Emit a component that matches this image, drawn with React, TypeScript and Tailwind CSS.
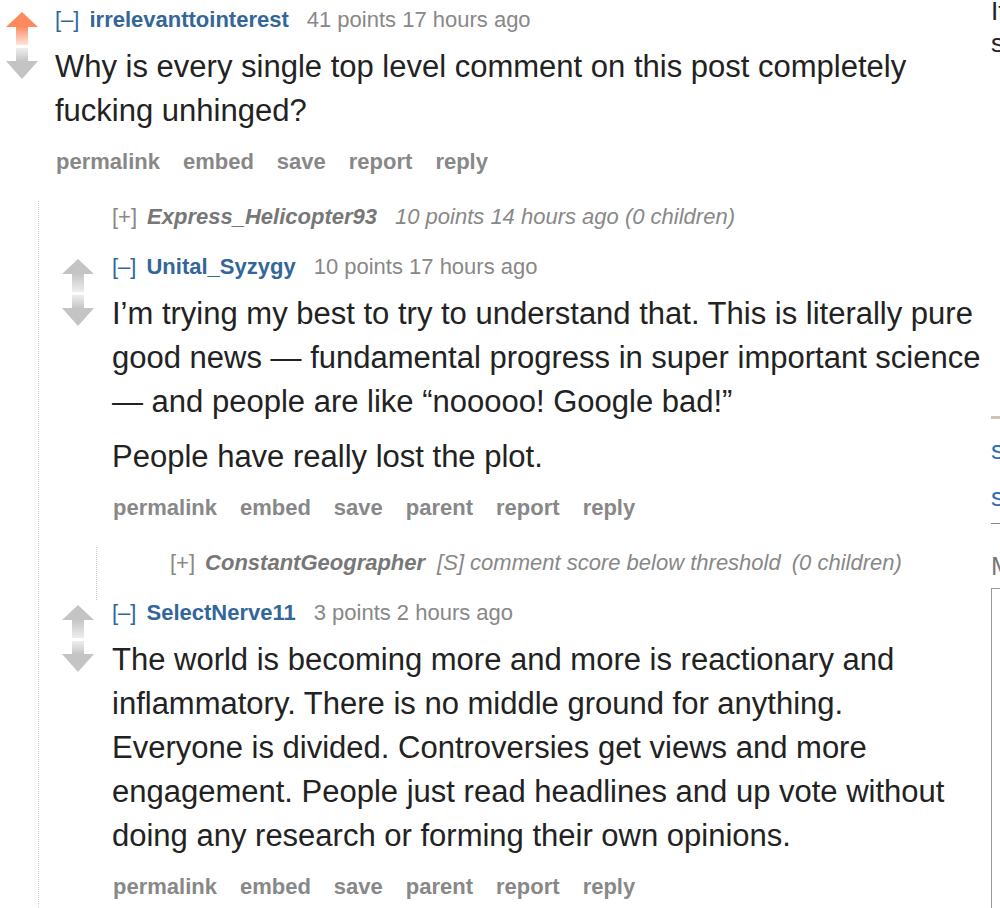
import React from "react";

function Arrows({ upvoted, id }: { upvoted: boolean; id: string }) {
  const upColor = upvoted ? "#fd8a5e" : "#c4c4c4";
  const upFade = upvoted ? "#fde6dc" : "#eeeeee";
  const grey = "#c4c4c4";
  return (
    <div className="flex flex-col gap-[3px]">
      <svg width="32" height="33" viewBox="0 0 32 33">
        <defs>
          <linearGradient id={`${id}u`} x1="0" y1="0" x2="0" y2="1">
            <stop offset="0" stopColor={upColor} />
            <stop offset="1" stopColor={upFade} />
          </linearGradient>
        </defs>
        <polygon points="16,0 32,15 0,15" fill={upColor} />
        <rect x="10" y="14.5" width="12" height="18.5" fill={`url(#${id}u)`} />
      </svg>
      <svg width="32" height="31" viewBox="0 0 32 31">
        <defs>
          <linearGradient id={`${id}d`} x1="0" y1="0" x2="0" y2="1">
            <stop offset="0" stopColor="#eeeeee" />
            <stop offset="1" stopColor={grey} />
          </linearGradient>
        </defs>
        <rect x="10" y="0" width="12" height="13.5" fill={`url(#${id}d)`} />
        <polygon points="0,13 32,13 16,31" fill={grey} />
      </svg>
    </div>
  );
}

function Header({ user, meta }: { user: string; meta: string }) {
  return (
    <div className="text-[22px] leading-[26px] whitespace-nowrap">
      <span className="text-[#336699]">[–]</span>
      <span className="ml-[10px] font-bold text-[#336699]">{user}</span>
      <span className="ml-[18px] text-[#888888]">{meta}</span>
    </div>
  );
}

function Body({ paras }: { paras: string[] }) {
  return (
    <div className="mt-[12px] flex flex-col gap-[11px] text-[31px] leading-[44px] text-[#222222]">
      {paras.map((p, i) => (
        <p key={i}>{p}</p>
      ))}
    </div>
  );
}

function Actions({ items }: { items: string[] }) {
  return (
    <div className="mt-[16px] flex gap-[23px] pl-[1px] text-[22px] leading-[26px] font-bold text-[#888888] whitespace-nowrap">
      {items.map((t) => (
        <span key={t}>{t}</span>
      ))}
    </div>
  );
}

function Collapsed({
  user,
  meta,
  extra,
  tight,
}: {
  user: string;
  meta: string;
  extra?: string;
  tight?: boolean;
}) {
  return (
    <div className="flex pb-[24px]">
      <div className="w-[34px] shrink-0" />
      <div className="pl-[16px] text-[22px] leading-[26px] whitespace-nowrap">
        <span className="text-[#888888]">[+]</span>
        <span className="ml-[10px] font-bold italic text-[#777777]">{user}</span>
        <span className={tight ? "ml-[12px] italic text-[#888888]" : "ml-[18px] italic text-[#888888]"}>{meta}</span>
        {extra ? <span className="ml-[11px] italic text-[#888888]">{extra}</span> : null}
      </div>
    </div>
  );
}

export default function App() {
  return (
    <div className="w-[1000px] h-[908px] overflow-hidden bg-white font-['Liberation_Sans',Arial,sans-serif]">
      <div className="flex">
        {/* main column */}
        <div className="w-[981.5px] shrink-0">
          <div className="flex">
            <div className="w-[38px] shrink-0 pl-[6px] pt-[12px]">
              <Arrows upvoted id="c1" />
            </div>
            <div className="flex-1 min-w-0">
              <div className="pl-[17px] pt-[7px]">
                <Header user="irrelevanttointerest" meta="41 points 17 hours ago" />
                <Body paras={["Why is every single top level comment on this post completely fucking unhinged?"]} />
                <Actions items={["permalink", "embed", "save", "report", "reply"]} />
              </div>
              <div className="mt-[26px] pt-[3px] pb-[40px] pl-[23px] border-l border-dotted border-[#c9c9e6]">
                <Collapsed user="Express_Helicopter93" meta="10 points 14 hours ago (0 children)" />

                <div className="flex">
                  <div className="w-[34px] shrink-0 pt-[5px]">
                    <Arrows upvoted={false} id="c2" />
                  </div>
                  <div className="flex-1 min-w-0">
                    <div className="pl-[16px]">
                      <Header user="Unital_Syzygy" meta="10 points 17 hours ago" />
                      <Body
                        paras={[
                          "I’m trying my best to try to understand that. This is literally pure good news — fundamental progress in super important science — and people are like “nooooo! Google bad!”",
                          "People have really lost the plot.",
                        ]}
                      />
                      <Actions items={["permalink", "embed", "save", "parent", "report", "reply"]} />
                    </div>
                    <div className="mt-[26px] pt-[3px] pl-[23px] border-l border-dotted border-[#c9c9e6]">
                      <Collapsed
                        user="ConstantGeographer"
                        meta="[S] comment score below threshold"
                        extra="(0 children)"
                        tight
                      />
                    </div>
                  </div>
                </div>

                <div className="flex">
                  <div className="w-[34px] shrink-0 pt-[5px]">
                    <Arrows upvoted={false} id="c3" />
                  </div>
                  <div className="flex-1 min-w-0">
                    <div className="pl-[16px]">
                      <Header user="SelectNerve11" meta="3 points 2 hours ago" />
                      <Body
                        paras={[
                          "The world is becoming more and more is reactionary and inflammatory. There is no middle ground for anything. Everyone is divided. Controversies get views and more engagement. People just read headlines and up vote without doing any research or forming their own opinions.",
                        ]}
                      />
                      <Actions items={["permalink", "embed", "save", "parent", "report", "reply"]} />
                    </div>
                  </div>
                </div>
              </div>
            </div>
          </div>
        </div>

        {/* sidebar (clipped at the window edge, as in the reference) */}
        <div className="ml-[9.5px] w-[300px] shrink-0 flex flex-col">
          <div className="mt-[-5px] text-[26px] leading-[32px] text-[#222222] whitespace-nowrap">
            <div>It’s a</div>
            <div>science</div>
          </div>
          <div className="mt-[357px] h-[3px] bg-[#cbc5b8]" />
          <div className="mt-[15px] text-[26px] leading-[32px] text-[#2e6db4] whitespace-nowrap">submit</div>
          <div className="mt-[15px] text-[26px] leading-[32px] text-[#2e6db4] whitespace-nowrap">subscribe</div>
          <div className="mt-[10px] h-[1px] bg-[#888888]" />
          <div className="mt-[26px] text-[26px] leading-[32px] text-[#777777] whitespace-nowrap">MODERATORS</div>
          <div className="mt-[6px] h-[400px] border border-[#999999]" />
        </div>
      </div>
    </div>
  );
}
